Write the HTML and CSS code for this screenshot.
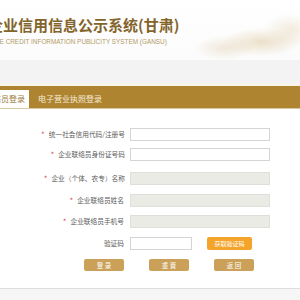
FILE: index.html
```html
<!DOCTYPE html>
<html lang="zh-CN">
<head>
<meta charset="utf-8">
<title>国家企业信用信息公示系统(甘肃)</title>
<link rel="stylesheet" href="styles.css">
</head>
<body>
<div class="page">
  <header class="header">
    <div class="title">国家企业信用信息公示系统(甘肃)</div>
    <div class="subtitle">NATIONAL ENTERPRISE CREDIT INFORMATION PUBLICITY SYSTEM (GANSU)</div>
  </header>
  <div class="band"></div>
  <div class="tabbar">
    <div class="tab tab-active">企业联络员登录</div>
    <div class="tab">电子营业执照登录</div>
  </div>
  <form class="form">
    <div class="row r1">
      <div class="label"><span class="star">*</span>统一社会信用代码/注册号</div>
      <div class="input"></div>
    </div>
    <div class="row r2">
      <div class="label"><span class="star">*</span>企业联络员身份证号码</div>
      <div class="input"></div>
    </div>
    <div class="row r3">
      <div class="label"><span class="star">*</span>企业（个体、农专）名称</div>
      <div class="input input-gray"></div>
    </div>
    <div class="row r4">
      <div class="label"><span class="star">*</span>企业联络员姓名</div>
      <div class="input input-gray"></div>
    </div>
    <div class="row r5">
      <div class="label"><span class="star">*</span>企业联络员手机号</div>
      <div class="input input-gray"></div>
    </div>
    <div class="row r6">
      <div class="label">验证码</div>
      <div class="input input-short"></div>
      <div class="btn-code">获取验证码</div>
    </div>
    <div class="actions">
      <div class="btn">登 录</div>
      <div class="btn">重 置</div>
      <div class="btn">返 回</div>
    </div>
  </form>
  <div class="footer"></div>
</div>
</body>
</html>
```
FILE: styles.css
```css
html, body {
  margin: 0;
  padding: 0;
  background: #ffffff;
}
body {
  width: 300px;
  height: 300px;
  overflow: hidden;
  font-family: "Noto Sans CJK SC", "Noto Sans", sans-serif;
}
.page {
  width: 300px;
}
.header {
  height: 60px;
  box-sizing: border-box;
  padding-top: 16px;
  background-color: #ffffff;
  background-image:
    radial-gradient(ellipse 40px 14px at 262px 42px, rgba(222, 200, 160, 0.55), rgba(222, 200, 160, 0) 100%),
    radial-gradient(ellipse 30px 12px at 225px 48px, rgba(225, 208, 175, 0.45), rgba(225, 208, 175, 0) 100%),
    radial-gradient(ellipse 26px 16px at 290px 30px, rgba(228, 212, 182, 0.45), rgba(228, 212, 182, 0) 100%),
    linear-gradient(#ffffff, #fbfbfb);
  overflow: hidden;
  white-space: nowrap;
}
.title {
  margin-left: -42px;
  font-size: 15px;
  line-height: 18px;
  font-weight: 700;
  color: #83642a;
}
.subtitle {
  margin-left: -70px;
  margin-top: 4px;
  font-family: "Liberation Sans", Arial, sans-serif;
  font-size: 6.4px;
  line-height: 8px;
  color: #b39a66;
}
.band {
  height: 23px;
  background: #f3f3f3;
  border-bottom: 3px solid #f8f5ec;
}
.tabbar {
  height: 22px;
  background: #ae8431;
  border-bottom: 1px solid #d9c9a6;
  display: flex;
  align-items: flex-end;
  margin-left: -35px;
  white-space: nowrap;
}
.tab {
  font-size: 8px;
  line-height: 18px;
  height: 18px;
  color: #f6ecd6;
  padding-left: 9px;
}
.tab-active {
  background: #ffffff;
  color: #9a7837;
  padding: 0 4px;
  width: 56px;
  text-align: right;
}
.form {
  margin: 0;
  padding-top: 19px;
  padding-bottom: 17px;
  border-bottom: 1px solid #dedede;
}
.row {
  display: flex;
  align-items: center;
  height: 13px;
}
.r2 { margin-top: 7px; }
.r3 { margin-top: 11px; }
.r4 { margin-top: 9px; }
.r5 { margin-top: 8px; }
.r6 { margin-top: 9px; }
.label {
  width: 125px;
  flex: none;
  display: flex;
  justify-content: flex-end;
  align-items: center;
  font-size: 6.7px;
  line-height: 13px;
  color: #5c5c5c;
  white-space: nowrap;
}
.r4 .label, .r5 .label, .r6 .label {
  width: 124px;
  margin-right: 1px;
}
.star {
  color: #e2505a;
  font-size: 8px;
  margin-right: 4px;
}
.input {
  margin-left: 5px;
  width: 140px;
  height: 13px;
  box-sizing: border-box;
  border: 1px solid #d5d5d5;
  background: #ffffff;
}
.input-gray {
  background: #ebebe6;
  border-color: #e0e0da;
}
.input-short {
  width: 62px;
}
.btn-code {
  margin-left: 15px;
  width: 45px;
  height: 13px;
  border-radius: 2px;
  background: #f4a42b;
  color: #ffffff;
  font-size: 6px;
  line-height: 13px;
  text-align: center;
}
.actions {
  display: flex;
  margin-top: 9px;
  padding-left: 84px;
  gap: 25px;
}
.btn {
  width: 40px;
  height: 12px;
  border-radius: 2px;
  background: #cba15a;
  color: #ffffff;
  font-size: 6.5px;
  line-height: 12px;
  text-align: center;
}
.footer {
  height: 12px;
  background: #f6f6f6;
}
```
